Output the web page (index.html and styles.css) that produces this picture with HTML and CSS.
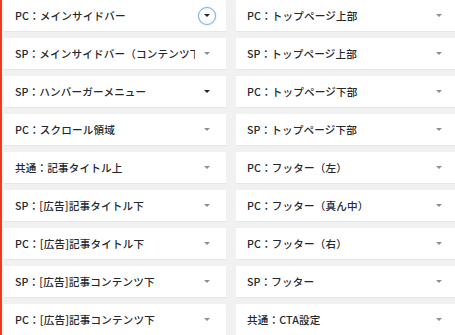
FILE: index.html
```html
<!DOCTYPE html>
<html lang="ja">
<head>
    <meta charset="UTF-8">
    <meta name="viewport" content="width=device-width, initial-scale=1.0">
    <title>ウィジェット</title>
    <link rel="stylesheet" href="styles.css">
</head>
<body>
    <div class="sidebars">
        <div class="sidebar">
            <h2 class="sidebar-name">PC：メインサイドバー</h2>
            <button class="toggle focus"><span class="arrow dark"></span></button>
        </div>
        <div class="sidebar">
            <h2 class="sidebar-name">PC：トップページ上部</h2>
            <button class="toggle"><span class="arrow"></span></button>
        </div>

        <div class="sidebar">
            <h2 class="sidebar-name">SP：メインサイドバー（コンテンツ下）</h2>
            <button class="toggle"><span class="arrow"></span></button>
        </div>
        <div class="sidebar">
            <h2 class="sidebar-name">SP：トップページ上部</h2>
            <button class="toggle"><span class="arrow"></span></button>
        </div>

        <div class="sidebar">
            <h2 class="sidebar-name">SP：ハンバーガーメニュー</h2>
            <button class="toggle"><span class="arrow dark"></span></button>
        </div>
        <div class="sidebar">
            <h2 class="sidebar-name">PC：トップページ下部</h2>
            <button class="toggle"><span class="arrow"></span></button>
        </div>

        <div class="sidebar">
            <h2 class="sidebar-name">PC：スクロール領域</h2>
            <button class="toggle"><span class="arrow"></span></button>
        </div>
        <div class="sidebar">
            <h2 class="sidebar-name">SP：トップページ下部</h2>
            <button class="toggle"><span class="arrow"></span></button>
        </div>

        <div class="sidebar">
            <h2 class="sidebar-name">共通：記事タイトル上</h2>
            <button class="toggle"><span class="arrow"></span></button>
        </div>
        <div class="sidebar">
            <h2 class="sidebar-name">PC：フッター（左）</h2>
            <button class="toggle"><span class="arrow"></span></button>
        </div>

        <div class="sidebar">
            <h2 class="sidebar-name">SP：[広告]記事タイトル下</h2>
            <button class="toggle"><span class="arrow"></span></button>
        </div>
        <div class="sidebar">
            <h2 class="sidebar-name">PC：フッター（真ん中）</h2>
            <button class="toggle"><span class="arrow"></span></button>
        </div>

        <div class="sidebar">
            <h2 class="sidebar-name">PC：[広告]記事タイトル下</h2>
            <button class="toggle"><span class="arrow"></span></button>
        </div>
        <div class="sidebar">
            <h2 class="sidebar-name">PC：フッター（右）</h2>
            <button class="toggle"><span class="arrow"></span></button>
        </div>

        <div class="sidebar">
            <h2 class="sidebar-name">SP：[広告]記事コンテンツ下</h2>
            <button class="toggle"><span class="arrow"></span></button>
        </div>
        <div class="sidebar">
            <h2 class="sidebar-name">SP：フッター</h2>
            <button class="toggle"><span class="arrow"></span></button>
        </div>

        <div class="sidebar">
            <h2 class="sidebar-name">PC：[広告]記事コンテンツ下</h2>
            <button class="toggle"><span class="arrow"></span></button>
        </div>
        <div class="sidebar">
            <h2 class="sidebar-name">共通：CTA設定</h2>
            <button class="toggle"><span class="arrow"></span></button>
        </div>
    </div>
</body>
</html>
```

FILE: styles.css
```css
html, body {
    margin: 0;
    padding: 0;
    height: 100%;
    overflow: hidden;
}
body {
    background-color: #f1f1f1;
    border-left: 2px solid #ee3a1f;
    font-family: "Noto Sans CJK JP", "Noto Sans", sans-serif;
    color: #23282d;
}
.sidebars {
    display: grid;
    grid-template-columns: 222px 222px;
    column-gap: 10px;
    row-gap: 7px;
    padding-left: 2px;
}
.sidebar {
    display: flex;
    align-items: center;
    height: 31px;
    padding: 0 11px 0 11px;
    background-color: #fff;
    box-shadow: 0 1px 1px rgba(0,0,0,0.04);
    box-sizing: border-box;
}
.sidebar-name {
    flex: 1;
    margin: 0 4px 0 0;
    font-size: 10.6px;
    font-weight: 500;
    line-height: 16px;
    letter-spacing: 0.15px;
    white-space: nowrap;
    overflow: hidden;
}
.toggle {
    display: flex;
    align-items: center;
    justify-content: center;
    width: 16px;
    height: 16px;
    padding: 0;
    border: none;
    border-radius: 50%;
    background: none;
}
.toggle.focus {
    box-shadow: 0 0 0 1px #7fb0e0, 0 0 2px 1px rgba(91,157,217,0.35);
}
.arrow {
    width: 0;
    height: 0;
    border-left: 3px solid transparent;
    border-right: 3px solid transparent;
    border-top: 3px solid #8c8f94;
}
.arrow.dark {
    border-top-color: #23282d;
}
```
